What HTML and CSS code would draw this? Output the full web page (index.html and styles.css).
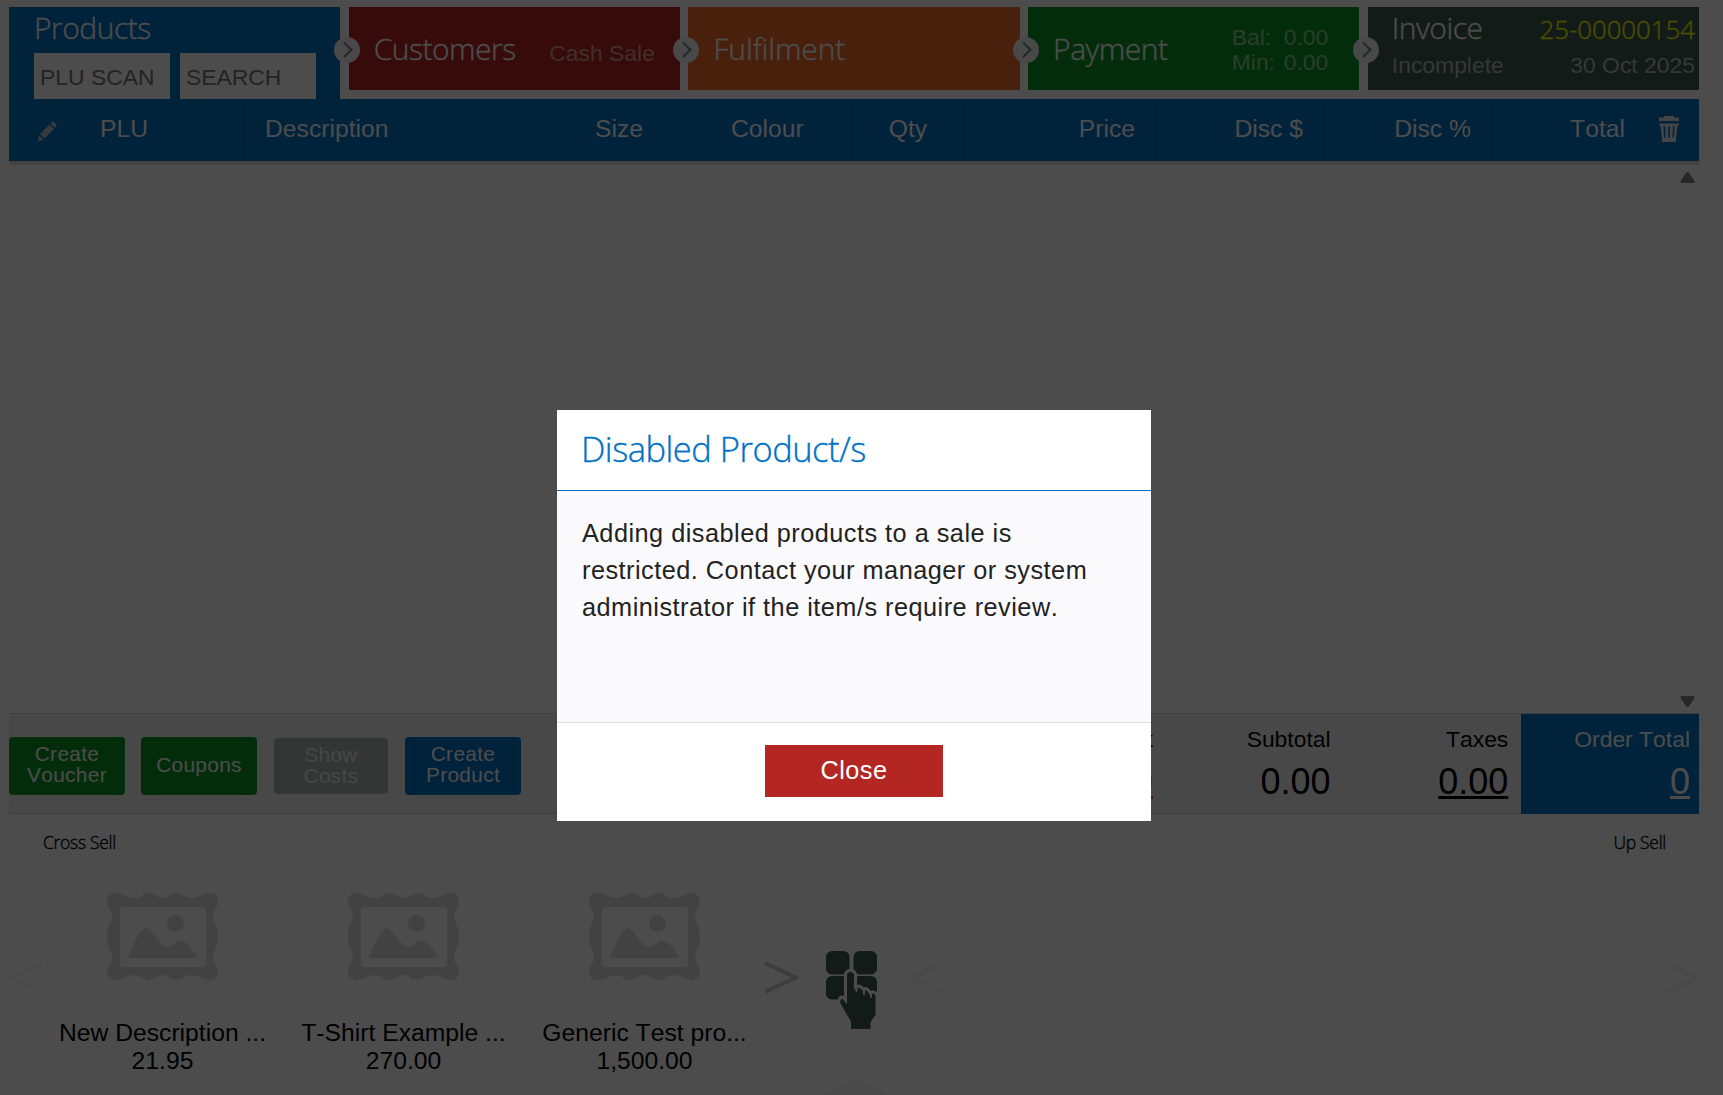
FILE: index.html
```
<!DOCTYPE html>
<html lang="en">
<head>
  <meta charset="UTF-8">
  <meta name="viewport" content="width=device-width, initial-scale=1.0">
  <title>Point of Sale</title>
  <link rel="stylesheet" href="styles.css">
</head>
<body>

  <!-- Shared shapes -->
  <svg class="defs">
    <symbol id="chevron" viewBox="0 0 26 26">
      <circle cx="13" cy="13" r="13" fill="#f4f4f4"/>
      <path d="M10 5.5 L17.5 12.8 L10 20" fill="none" stroke="#7a8883" stroke-width="2"/>
    </symbol>
    <symbol id="picture" viewBox="0 0 111 87">
      <path fill="#dedede" fill-rule="evenodd" d="M8 0 C15 0 20 5 28 5 C34 5 37 0 42 0 C48 0 50 5 56 5 C62 5 64 0 70 0 C75 0 78 5 84 5 C91 5 97 0 103 0 C109 0 111 5 111 9 C111 15 106 17 106 22 C106 28 111 34 111 43 C111 53 106 59 106 65 C106 70 111 73 111 78 C111 83 108 87 103 87 C97 87 91 82 84 82 C78 82 75 87 69 87 C63 87 61 82 56 82 C50 82 47 87 41 87 C35 87 33 82 28 82 C21 82 15 87 8 87 C3 87 0 83 0 78 C0 73 5 70 5 65 C5 59 0 53 0 43 C0 34 5 28 5 22 C5 17 0 15 0 9 C0 4 3 0 8 0 Z M17 14 Q13 14 13 18 V70 Q13 74 17 74 H95 Q99 74 99 70 V18 Q99 14 95 14 Z"/>
      <circle cx="68.500" cy="30.500" r="8.500" fill="#dedede"/>
      <path fill="#dedede" d="M22 65 C20 65 22 61 24 57 C28 48 34 35 39 35 C45 35 52 54 61 54 C66 54 67 48 73 48 C80 48 85 56 89 62 C91 65 89 65 87 65 Z"/>
    </symbol>
  </svg>

  <!-- Sale steps -->
  <div class="steps">
    <div class="step products">
      <h2>Products</h2>
      <div class="inputs">
        <input type="text" placeholder="PLU SCAN">
        <input type="text" placeholder="SEARCH">
      </div>
    </div>
    <div class="step customers">
      <svg class="chevron"><use href="#chevron"/></svg>
      <h2>Customers</h2>
      <span class="info">Cash Sale</span>
    </div>
    <div class="step fulfilment">
      <svg class="chevron"><use href="#chevron"/></svg>
      <h2>Fulfilment</h2>
    </div>
    <div class="step payment">
      <svg class="chevron"><use href="#chevron"/></svg>
      <h2>Payment</h2>
      <div class="balance">
        <span>Bal:</span><span>0.00</span>
        <span>Min:</span><span>0.00</span>
      </div>
    </div>
    <div class="step invoice">
      <svg class="chevron"><use href="#chevron"/></svg>
      <div class="invoice-row">
        <h2>Invoice</h2>
        <span class="number">25-00000154</span>
      </div>
      <div class="invoice-row status">
        <span>Incomplete</span>
        <span>30 Oct 2025</span>
      </div>
    </div>
  </div>

  <!-- Item list -->
  <div class="list-head">
    <div class="edit">
      <svg width="20" height="21" viewBox="0 0 20 21" fill="#b9c6d0"><path d="M1 20 L2 14.500 L6.500 19 Z M3 13 L12.500 3.500 L17 8 L7.500 17.500 Z M13.500 2.500 L15 1 Q16 0 17 1 L19.200 3.300 Q20 4.300 19 5.500 L18 7 Z"/></svg>
    </div>
    <div>PLU</div>
    <div>Description</div>
    <div>Size</div>
    <div>Colour</div>
    <div class="center">Qty</div>
    <div class="right">Price</div>
    <div class="right">Disc $</div>
    <div class="right">Disc %</div>
    <div class="total">Total
      <svg width="20" height="26" viewBox="0 0 20 26" fill="#e4e8ea"><path fill-rule="evenodd" d="M5 1 Q5 0 6 0 H14 Q15 0 15 1 V1.500 H20 V5 H0 V1.500 H5 Z M0 7.500 H20 V9.500 H18.500 L17 23 V26 H3 V23 L1.500 9.500 H0 Z M4.500 10 L5 21.500 H6.500 L6 10 Z M9.200 10 V21.500 H10.800 V10 Z M14 10 L13.500 21.500 H15 L15.500 10 Z"/></svg>
    </div>
  </div>
  <div class="list">
    <svg width="15" height="11" viewBox="0 0 15 11"><path d="M6 1 Q7.500 -1 9 1 L14.500 9 Q15 11 13 11 H2 Q0 11 .5 9 Z" fill="#828282"/></svg>
    <svg width="15" height="11" viewBox="0 0 15 11"><path d="M6 10 Q7.500 12 9 10 L14.500 2 Q15 0 13 0 H2 Q0 0 .5 2 Z" fill="#828282"/></svg>
  </div>

  <!-- Actions and totals -->
  <div class="summary">
    <div class="actions">
      <button class="green">Create Voucher</button>
      <button class="green">Coupons</button>
      <button class="disabled">Show Costs</button>
      <button class="blue">Create Product</button>
    </div>
    <div class="amount discount"><span>Discount</span><b><u>0.00</u></b></div>
    <div class="amount"><span>Subtotal</span><b>0.00</b></div>
    <div class="amount"><span>Taxes</span><b><u>0.00</u></b></div>
    <div class="amount order"><span>Order Total</span><b><u>0</u></b></div>
  </div>

  <!-- Cross sell / up sell -->
  <div class="sell-titles">
    <span>Cross Sell</span>
    <span>Up Sell</span>
  </div>
  <div class="sell">
    <svg class="arrow faint" viewBox="0 0 33 33"><path d="M33 2 L2 16.500 L33 31"/></svg>
    <div class="card"><svg><use href="#picture"/></svg><p>New Description ...</p><p>21.95</p></div>
    <div class="card"><svg><use href="#picture"/></svg><p>T-Shirt Example ...</p><p>270.00</p></div>
    <div class="card"><svg><use href="#picture"/></svg><p>Generic Test pro...</p><p>1,500.00</p></div>
    <svg class="arrow next" viewBox="0 0 33 33"><path d="M0 2 L31 16.500 L0 31"/></svg>
    <svg class="keypad" viewBox="0 0 51 78">
      <g fill="#3c5a50">
        <rect x="0" y="0" width="23.500" height="23.500" rx="6"/>
        <rect x="27.500" y="0" width="23.500" height="23.500" rx="6"/>
        <rect x="0" y="25" width="23.500" height="23.500" rx="6"/>
        <rect x="27.500" y="25" width="23.500" height="23.500" rx="6"/>
      </g>
      <path fill="#3c5a50" stroke="#fff" stroke-width="3" d="M19.500 49 V24 Q20 19.500 24.500 19.500 Q29 19.500 29.500 24 V36 Q34 33.500 37 38 Q41 36 44 41.500 Q49 40 51 44 V64 L46 72 V82 H23.500 V71 L12.500 52 Q14 42 19.500 49 Z"/>
      <path stroke="#fff" stroke-width="2" stroke-linecap="round" d="M30.500 35 V40 M38 38 V43 M45 42 V46"/>
    </svg>
    <svg class="arrow faint" viewBox="0 0 33 33"><path d="M33 2 L2 16.500 L33 31"/></svg>
    <svg class="arrow faint last" viewBox="0 0 33 33"><path d="M0 2 L31 16.500 L0 31"/></svg>
  </div>
  <svg class="drawer-handle" viewBox="0 0 70 16"><path d="M0 16 L28 2 Q34 -1 40 2 L70 16 Z" fill="#f4f4f4"/></svg>

  <!-- Message -->
  <div class="overlay">
    <div class="modal">
      <h1>Disabled Product/s</h1>
      <div class="message">Adding disabled products to a sale is restricted. Contact your manager or system administrator if the item/s require review.</div>
      <div class="footer">
        <button>Close</button>
      </div>
    </div>
  </div>

</body>
</html>
```
FILE: styles.css
```
* {
  box-sizing: border-box;
}

body {
  margin: 0;
  padding: 7px 24px 0 9px;
  height: 1095px;
  overflow: hidden;
  background: #fff;
  font-family: "Liberation Sans", Arial, sans-serif;
  font-size: 22.9px;
  font-kerning: none;
  color: #000;
}

h1, h2, p {
  margin: 0;
  font-weight: normal;
}

h1, h2, .number, .sell-titles {
  font-family: "Open Sans", "Noto Sans", sans-serif;
  font-weight: 300;
  -webkit-text-stroke: .35px;
}

.defs {
  display: none;
}

/* steps */
.steps {
  display: grid;
  grid-template-columns: repeat(5, 1fr);
  gap: 8.5px;
  height: 92px;
  color: #fff;
}

.step {
  position: relative;
  display: flex;
  align-items: center;
  height: 83px;
  padding-left: 25px;
}

.step h2 {
  font-size: 30px;
  line-height: 40px;
  letter-spacing: -.5px;
}

.chevron {
  position: absolute;
  left: -15px;
  top: 30px;
  width: 26px;
  height: 26px;
}

.products {
  display: block;
  height: 92px;
  padding-top: 1px;
  background: #0072c6;
}

.inputs {
  display: flex;
  gap: 10px;
  margin-top: 5px;
}

.inputs input {
  width: 136px;
  height: 46px;
  padding: 3px 6px 0;
  border: 0;
  background: #fff;
  font: inherit;
  font-kerning: none;
}

.customers {
  justify-content: space-between;
  padding-right: 25px;
  background: #b42621;
}

.info {
  margin-top: 10px;
  color: rgba(255, 255, 255, .55);
}

.fulfilment {
  background: #f06c28;
}

.step.fulfilment h2 {
  letter-spacing: -.1px;
}

.payment {
  justify-content: space-between;
  padding-right: 31px;
  background: #0a9622;
}

.balance {
  display: grid;
  grid-template-columns: 52px auto;
  margin-top: 2px;
  line-height: 25px;
  color: rgba(255, 255, 255, .55);
}

.invoice {
  display: block;
  padding-top: 1px;
  padding-left: 24px;
  padding-right: 4px;
  background: #3c5a50;
}

.invoice-row {
  display: flex;
  justify-content: space-between;
  align-items: baseline;
}

.number {
  font-size: 25.8px;
  color: #ff0;
}

.status {
  line-height: 34px;
  color: rgba(255, 255, 255, .6);
}

/* item list */
.list-head {
  display: grid;
  grid-template-columns: 74px 165px 330px 136px 135px 119px 185px 168px 168px 210px;
  height: 62px;
  background: #0072c6;
  box-shadow: 0 4px 0 #e0e0e0;
  color: #fff;
  font-size: 24.7px;
  line-height: 60px;
}

.list-head div {
  padding: 0 17px;
  border-right: 1px solid #0a80d4;
}

.list-head .edit {
  display: flex;
  align-items: center;
  padding-left: 28px;
  padding-top: 2px;
}

.list-head .center {
  text-align: center;
}

.list-head .right {
  text-align: right;
}

.list-head .total {
  display: flex;
  justify-content: flex-end;
  gap: 34px;
  padding-right: 20px;
  border: 0;
}

.total svg {
  margin-top: 17px;
}

.list {
  display: flex;
  flex-direction: column;
  justify-content: space-between;
  align-items: flex-end;
  height: 552px;
  padding: 11px 4px 6px;
}

/* summary */
.summary {
  display: flex;
  height: 101px;
  border-top: 1px solid #d4d4d4;
  border-bottom: 1px solid #d4d4d4;
  background: #f1f1f1;
}

.actions {
  display: flex;
  align-items: center;
  gap: 16px;
  flex: 1;
  padding-top: 5px;
}

.actions button {
  width: 116px;
  height: 58px;
  padding: 0 14px 4px;
  border: 0;
  border-radius: 4px;
  color: #fff;
  font-family: inherit;
  font-size: 20.9px;
  font-kerning: none;
  line-height: 21px;
  letter-spacing: .3px;
}

.actions .green {
  background: #0a9622;
}

.actions .blue {
  background: #0072c6;
}

.actions .disabled {
  width: 114px;
  height: 56px;
  margin: 0 1px;
  padding-bottom: 2px;
  background: #afb4b2;
  color: #eee;
}

.amount {
  width: 177.7px;
  padding: 12px 13px 0 0;
  text-align: right;
  line-height: 26px;
}

.amount span,
.amount b {
  display: block;
}

.amount b {
  margin-top: 10px;
  font-size: 36px;
  font-weight: normal;
  line-height: 40px;
}

.amount u {
  text-decoration-thickness: 3px;
  text-underline-offset: 2px;
}

.discount b {
  color: #d2501e;
}

.order {
  height: 100px;
  padding-right: 9px;
  background: #0072c6;
  color: #fff;
}

/* cross sell */
.sell-titles {
  display: flex;
  justify-content: space-between;
  padding: 16px 33px 0 34px;
  font-size: 17.5px;
  line-height: 25px;
  letter-spacing: -.3px;
}

.sell {
  display: flex;
  height: 187px;
  margin-top: 38px;
}

.arrow {
  width: 33px;
  height: 33px;
  margin-top: 68px;
  fill: none;
  stroke: #ccc;
  stroke-width: 4;
}

.faint {
  stroke: #f3f3f3;
}

.card {
  width: 241px;
  text-align: center;
  font-size: 24.7px;
  line-height: 28px;
}

.card svg {
  display: block;
  width: 111px;
  height: 87px;
  margin: 0 auto 39px;
}

.keypad {
  width: 51px;
  height: 78px;
  margin: 58px 33px 0 28px;
}

.last {
  margin-left: auto;
}

.drawer-handle {
  display: block;
  width: 70px;
  height: 16px;
  margin-left: 813px;
}

/* message */
.overlay {
  position: fixed;
  inset: 0;
  background: rgba(0, 0, 0, .7);
}

.modal {
  width: 594px;
  height: 411px;
  margin: 410px 0 0 557px;
  display: flex;
  flex-direction: column;
  background: #fff;
}

.modal h1 {
  height: 81px;
  padding-left: 24px;
  border-bottom: 1px solid #0072c6;
  color: #0072c6;
  font-size: 34.5px;
  line-height: 77px;
  letter-spacing: -.5px;
}

.message {
  flex: 1;
  padding: 24px 25px;
  background: #fafafc;
  color: #222;
  font-size: 25.3px;
  line-height: 37px;
  letter-spacing: .48px;
}

.footer {
  height: 99px;
  padding-top: 22px;
  border-top: 1px solid #ddd;
  text-align: center;
}

.footer button {
  width: 178px;
  height: 52px;
  padding-bottom: 3px;
  border: 0;
  background: #b42621;
  color: #fff;
  font-family: inherit;
  font-size: 25.3px;
  letter-spacing: .5px;
}
```
